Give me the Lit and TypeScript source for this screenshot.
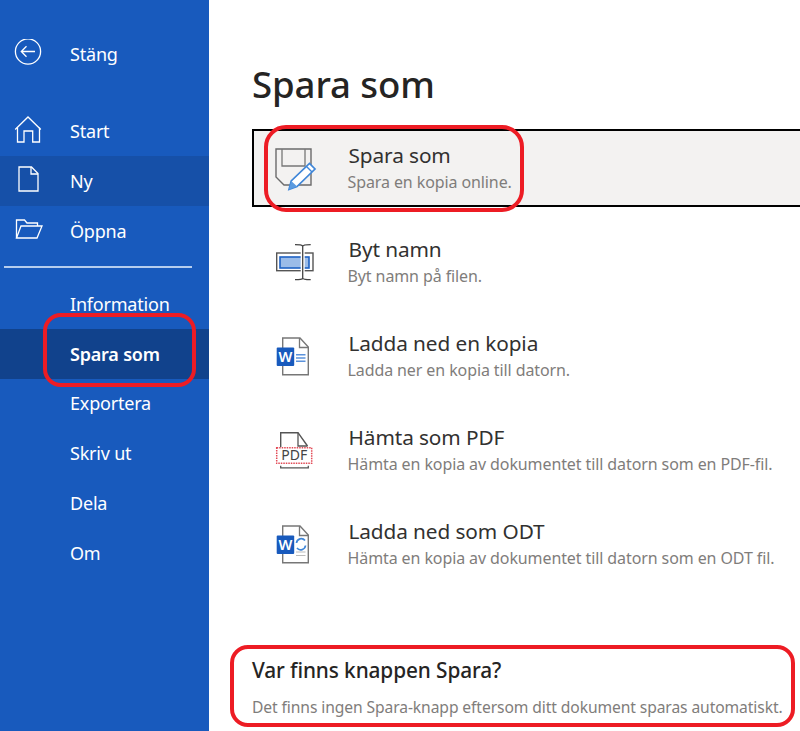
import { LitElement, html, css, svg } from "lit";
import { customElement } from "lit/decorators.js";

const wordDoc = svg`<path d="M10.700 6H28l8.300 9v27.700H10.700z" fill="#fff" stroke="#777" stroke-width="1.400"/><path d="M27.500 6v9.500h8.800" stroke="#777" stroke-width="1.300"/>`;
const wordBadge = svg`<rect x="4.700" y="15.500" width="17.500" height="18.500" rx="1" fill="#185abd"/><text x="13.400" y="30" text-anchor="middle" font-family="Noto Sans" font-size="14.500" font-weight="600" fill="#fff">W</text>`;

const I = {
  back: svg`<svg class="ic" viewBox="0 0 30 30" width="30" height="30" fill="none" stroke="#fff" stroke-width="1.300"><circle cx="15" cy="12.500" r="12.600"/><path d="M22 12.500H8.500M13.500 7.300 8.300 12.500l5.200 5.200"/></svg>`,
  home: svg`<svg class="ic" viewBox="0 0 30 30" width="30" height="30" fill="none" stroke="#fff" stroke-width="1.300"><path d="M2.200 13.500 15 1l12.800 12.500"/><path d="M4.500 11.500V26h6.500V15h8.700V26H26.500V11.500"/></svg>`,
  doc: svg`<svg class="ic" viewBox="0 0 30 30" width="30" height="30" fill="none" stroke="#fff" stroke-width="1.300"><path d="M6 1h12.500L25 7.500V25H6z"/><path d="M18 1v7h7"/></svg>`,
  open: svg`<svg class="ic" viewBox="0 0 30 30" width="30" height="30" fill="none" stroke="#fff" stroke-width="1.300"><path d="M3.500 22V4h8l2.500 3h10.500v3"/><path d="M3.500 22 8 10h21l-5 12z"/></svg>`,
  save: svg`<svg viewBox="0 0 48 48" width="48" height="48" fill="none"><path d="M4 5h35v36H12l-8-8z" stroke="#6b6b6b" stroke-width="1.400"/><path d="M10 5v17h23V5" stroke="#777" stroke-width="1.300"/><path d="M17 45.500l2.200-8.500L37.500 19.500l5.500 5.500-18 17.500z" fill="#fff" stroke="#3f86d8" stroke-width="1.700"/><path d="M17 45.500l2.200-8.500 6 5.500z" fill="#5b9be0"/><path d="M34.500 22.500l5.500 5.500" stroke="#3f86d8" stroke-width="1.400"/></svg>`,
  rename: svg`<svg viewBox="0 0 48 48" width="48" height="48" fill="none"><rect x="4.700" y="15" width="36.300" height="17.700" fill="#fff" stroke="#555" stroke-width="1.400"/><rect x="8" y="19" width="29" height="11" fill="#9bbce8" stroke="#1f62c4" stroke-width="1.600"/><path d="M30.700 8v32" stroke="#fff" stroke-width="4"/><path d="M30.700 8v32M23 6.700c4 0 7.700 0 7.700 1.800 0-1.800 3.700-1.800 8-1.800M23 41.700c4 0 7.700 0 7.700-1.800 0 1.800 3.700 1.800 8 1.800" stroke="#444" stroke-width="1.300"/></svg>`,
  word: svg`<svg viewBox="0 0 48 48" width="48" height="48" fill="none">${wordDoc}${wordBadge}<path d="M24 22.700h9.500M24 26h9.500M24 29.300h9.500" stroke="#5b92dc" stroke-width="1.500"/></svg>`,
  pdf: svg`<svg viewBox="0 0 48 48" width="48" height="48" fill="none"><path d="M8.700 21V6.700H26L35.500 20" stroke="#555" stroke-width="1.400"/><path d="M26 6.700V20h9.500" stroke="#555" stroke-width="1.300"/><rect x="4.700" y="21.700" width="35" height="15.600" fill="#fff" stroke="#e24a56" stroke-dasharray="1.500 1" stroke-width="1.500"/><text x="22.200" y="34" text-anchor="middle" font-family="Noto Sans" font-size="14" fill="#444">PDF</text><path d="M8.700 39.800v2h27.600v-2" stroke="#555" stroke-width="1.300"/></svg>`,
  odt: svg`<svg viewBox="0 0 48 48" width="48" height="48" fill="none">${wordDoc}${wordBadge}<path d="M24.500 23a4.800 4.800 0 0 1 8.500-2.500M33.500 25.500a4.800 4.800 0 0 1-8.500 2.500" stroke="#3f86d8" stroke-width="1.700"/><path d="M24 32h9.500M24 35.500h9.500" stroke="#bbb" stroke-width="1.200"/></svg>`,
};

const top = [
  { t: "Start", i: I.home },
  { t: "Ny", i: I.doc, hov: true },
  { t: "Öppna", i: I.open },
];
const sub = [
  { t: "Information" },
  { t: "Spara som", act: true },
  { t: "Exportera" },
  { t: "Skriv ut" },
  { t: "Dela" },
  { t: "Om" },
];
const rows = [
  { t: "Spara som", s: "Spara en kopia online.", i: I.save, sel: true },
  { t: "Byt namn", s: "Byt namn på filen.", i: I.rename },
  { t: "Ladda ned en kopia", s: "Ladda ner en kopia till datorn.", i: I.word },
  { t: "Hämta som PDF", s: "Hämta en kopia av dokumentet till datorn som en PDF-fil.", i: I.pdf },
  { t: "Ladda ned som ODT", s: "Hämta en kopia av dokumentet till datorn som en ODT fil.", i: I.odt },
];

@customElement("app-root")
export class AppRoot extends LitElement {
  static styles = css`
    :host {
      display: block;
      width: 800px;
      height: 731px;
      overflow: hidden;
      position: relative;
      background: #fff;
      font-family: "Noto Sans", "Open Sans", sans-serif;
    }
    .page { display: flex; height: 731px; }
    .side {
      width: 209px;
      flex: none;
      background: #185abd;
      color: #fff;
      padding-top: 29px;
      box-sizing: border-box;
    }
    .item {
      height: 49.8px;
      display: flex;
      align-items: center;
      padding-left: 70px;
      position: relative;
      font-size: 18px;
      letter-spacing: -0.2px;
    }
    .item .ic { position: absolute; left: 13px; top: 10px; }
    .item.hov { background: #1650a8; }
    .item.act { background: #11428c; font-weight: 600; }
    .first { margin-bottom: 27.500px; }
    .rule { height: 1.500px; background: #b5cdee; margin: 10.800px 17px 11px 4px; }
    .main { flex: 1; min-width: 0; padding: 0 0 0 43px; display: flex; flex-direction: column; }
    h1 {
      margin: 61px 0 21px;
      font-size: 36.600px;
      line-height: 47px;
      font-weight: 500;
      color: #252423;
      letter-spacing: -0.1px;
    }
    .row {
      height: 78px;
      margin-bottom: 16px;
      box-sizing: border-box;
      display: flex;
      align-items: center;
      padding-left: 18px;
      margin-right: -30px;
      border: 2px solid transparent;
    }
    .row.sel { background: #f3f2f1; border-color: #000; }
    .row svg { flex: none; }
    .txt { margin: -1px 0 0 28.500px; }
    .ti { font-size: 20.800px; line-height: 28px; color: #323130; letter-spacing: -0.1px; white-space: nowrap; }
    .su { font-size: 16px; line-height: 24px; margin-top: 1px; margin-left: -1px; color: #7f7d7b; letter-spacing: -0.1px; white-space: nowrap; }
    .foot { margin-top: 58px; }
    .ft { font-size: 20.800px; line-height: 26px; font-weight: 500; color: #252423; letter-spacing: -0.1px; }
    .fd { font-size: 15.650px; line-height: 22px; color: #7f7d7b; margin-top: 13px; white-space: nowrap; letter-spacing: -0.1px; }
    .mark {
      position: absolute;
      border: 4px solid #ed1c24;
      box-sizing: border-box;
      pointer-events: none;
    }
    .m1 { left: 264px; top: 125px; width: 260px; height: 87px; border-radius: 22px; }
    .m2 { left: 43px; top: 313px; width: 153px; height: 74px; border-radius: 18px; }
    .m3 { left: 230px; top: 645px; width: 565px; height: 82px; border-radius: 18px; }
  `;

  render() {
    return html`
      <div class="page">
        <nav class="side">
          <div class="item first">${I.back}Stäng</div>
          ${top.map((x) => html`<div class="item ${x.hov ? "hov" : ""}">${x.i}${x.t}</div>`)}
          <div class="rule"></div>
          ${sub.map((x) => html`<div class="item ${x.act ? "act" : ""}">${x.t}</div>`)}
        </nav>
        <main class="main">
          <h1>Spara som</h1>
          ${rows.map(
            (r) => html`<div class="row ${r.sel ? "sel" : ""}">
              ${r.i}
              <div class="txt"><div class="ti">${r.t}</div><div class="su">${r.s}</div></div>
            </div>`
          )}
          <div class="foot">
            <div class="ft">Var finns knappen Spara?</div>
            <div class="fd">Det finns ingen Spara-knapp eftersom ditt dokument sparas automatiskt.</div>
          </div>
        </main>
      </div>
      <div class="mark m1"></div>
      <div class="mark m2"></div>
      <div class="mark m3"></div>
    `;
  }
}
